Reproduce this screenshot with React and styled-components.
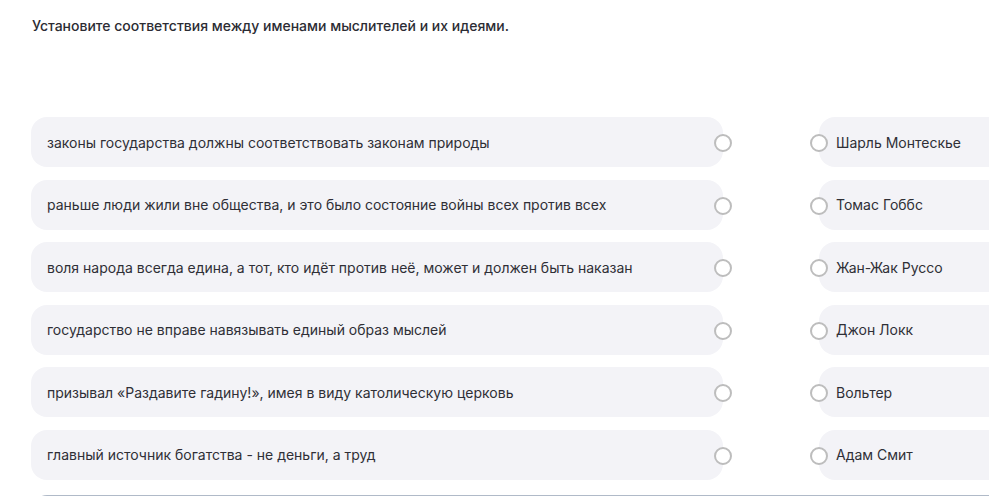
import React from 'react';
import styled, { createGlobalStyle } from 'styled-components';

const GlobalStyle = createGlobalStyle`
  html, body {
    margin: 0;
    padding: 0;
    background: #ffffff;
  }
  body {
    font-family: Inter, "Noto Sans", sans-serif;
    overflow: hidden;
  }
`;

const pairs = [
  ['законы государства должны соответствовать законам природы', 'Шарль Монтескье'],
  ['раньше люди жили вне общества, и это было состояние войны всех против всех', 'Томас Гоббс'],
  ['воля народа всегда едина, а тот, кто идёт против неё, может и должен быть наказан', 'Жан-Жак Руссо'],
  ['государство не вправе навязывать единый образ мыслей', 'Джон Локк'],
  ['призывал «Раздавите гадину!», имея в виду католическую церковь', 'Вольтер'],
  ['главный источник богатства - не деньги, а труд', 'Адам Смит'],
];

const App = () => (
  <Page>
    <GlobalStyle />
    <Title>Установите соответствия между именами мыслителей и их идеями.</Title>
    <Board>
      {pairs.map(([idea, name]) => (
        <React.Fragment key={name}>
          <Card side="left">
            {idea}
            <Radio side="left" />
          </Card>
          <Card side="right">
            <Radio side="right" />
            {name}
          </Card>
        </React.Fragment>
      ))}
    </Board>
    <Footer />
  </Page>
);

export default App;

const Page = styled.div`
  width: 989px;
  height: 496px;
  overflow: hidden;
  padding: 17px 0 0 31px;
  box-sizing: border-box;
`;

const Title = styled.h1`
  margin: 0 0 0 1px;
  font-size: 14px;
  line-height: 17px;
  font-weight: 500;
  color: #2c2c33;
`;

const Board = styled.div`
  display: grid;
  grid-template-columns: 692px 200px;
  column-gap: 96px;
  row-gap: 12.5px;
  margin-top: 83px;
`;

const Card = styled.div`
  position: relative;
  height: 50px;
  display: flex;
  align-items: center;
  box-sizing: border-box;
  padding: ${p => (p.side === 'left' ? '0 16px' : '0 16px 0 17px')};
  background: #f3f3f7;
  border-radius: 16px;
  font-size: 14px;
  color: #2f2f36;
  white-space: nowrap;
`;

const Radio = styled.span`
  position: absolute;
  top: 50%;
  ${p => (p.side === 'left' ? 'right: -9px;' : 'left: -9px;')}
  width: 14px;
  height: 14px;
  margin-top: -8px;
  border: 2px solid #bdbdbd;
  border-radius: 50%;
  background: #ffffff;
`;

const Footer = styled.div`
  margin: 15px 0 0 2px;
  height: 20px;
  border-top: 2px solid #b0bac8;
  border-radius: 14px 0 0 0;
`;
